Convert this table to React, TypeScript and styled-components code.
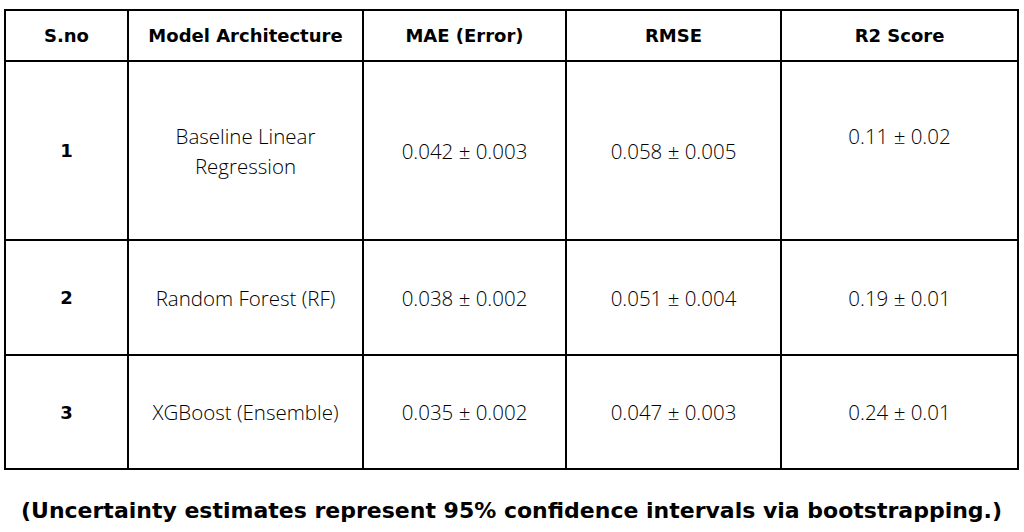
import React from "react";
import styled, { createGlobalStyle } from "styled-components";

const Global = createGlobalStyle`
  html, body { margin: 0; padding: 0; background: #ffffff; }
  body { width: 1024px; height: 532px; overflow: hidden; }
`;

const Page = styled.div`
  width: 1024px;
  height: 532px;
  box-sizing: border-box;
  padding: 9px 0 0 4px;
  display: flex;
  flex-direction: column;
  color: #000;
`;

const Table = styled.table`
  border-collapse: collapse;
  table-layout: fixed;
  width: 1015px;
  border: 2px solid #000;
`;

const HeadCell = styled.th`
  border: 2px solid #000;
  font-family: "DejaVu Sans", "Liberation Sans", sans-serif;
  font-weight: 700;
  font-size: 18px;
  text-align: center;
  vertical-align: middle;
  padding: 0;
`;

const Row = styled.tr<{ $h: number }>`
  height: ${(p) => p.$h}px;
`;

const NumCell = styled.td`
  border: 2px solid #000;
  font-family: "DejaVu Sans", "Liberation Sans", sans-serif;
  font-weight: 700;
  font-size: 18px;
  text-align: center;
  vertical-align: middle;
  padding: 0;
`;

const Cell = styled.td<{ $lift?: boolean }>`
  border: 2px solid #000;
  font-family: "Open Sans", "Liberation Sans", sans-serif;
  font-weight: 300;
  font-size: 20.5px;
  line-height: 30px;
  color: #000;
  text-align: center;
  vertical-align: middle;
  padding: 0 0 ${(p) => (p.$lift ? 30 : 0)}px;
`;

const Note = styled.div`
  margin-top: 28px;
  text-align: center;
  width: 1015px;
  font-family: "DejaVu Sans", "Liberation Sans", sans-serif;
  font-weight: 700;
  font-size: 22px;
`;

const widths = [123, 235, 203, 215, 237];

const rows = [
  { n: "1", model: ["Baseline Linear", "Regression"], mae: "0.042 ± 0.003", rmse: "0.058 ± 0.005", r2: "0.11 ± 0.02", h: 179, lift: true },
  { n: "2", model: ["Random Forest (RF)"], mae: "0.038 ± 0.002", rmse: "0.051 ± 0.004", r2: "0.19 ± 0.01", h: 115, lift: false },
  { n: "3", model: ["XGBoost (Ensemble)"], mae: "0.035 ± 0.002", rmse: "0.047 ± 0.003", r2: "0.24 ± 0.01", h: 114, lift: false },
];

export default function App() {
  return (
    <Page>
      <Global />
      <Table>
        <colgroup>
          {widths.map((w, i) => (
            <col key={i} style={{ width: w }} />
          ))}
        </colgroup>
        <thead>
          <Row $h={51}>
            <HeadCell>S.no</HeadCell>
            <HeadCell>Model Architecture</HeadCell>
            <HeadCell>MAE (Error)</HeadCell>
            <HeadCell>RMSE</HeadCell>
            <HeadCell>R2 Score</HeadCell>
          </Row>
        </thead>
        <tbody>
          {rows.map((r) => (
            <Row key={r.n} $h={r.h}>
              <NumCell>{r.n}</NumCell>
              <Cell>
                {r.model.map((l, i) => (
                  <div key={i}>{l}</div>
                ))}
              </Cell>
              <Cell>{r.mae}</Cell>
              <Cell>{r.rmse}</Cell>
              <Cell $lift={r.lift}>{r.r2}</Cell>
            </Row>
          ))}
        </tbody>
      </Table>
      <Note>(Uncertainty estimates represent 95% confidence intervals via bootstrapping.)</Note>
    </Page>
  );
}
